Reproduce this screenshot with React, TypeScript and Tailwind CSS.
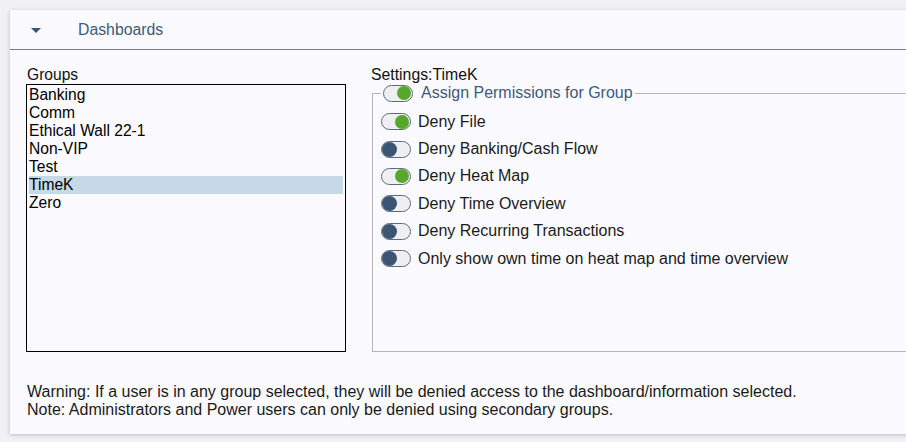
import React from "react";

const groups = ["Banking", "Comm", "Ethical Wall 22-1", "Non-VIP", "Test", "TimeK", "Zero"];

const perms: { label: string; on: boolean }[] = [
  { label: "Deny File", on: true },
  { label: "Deny Banking/Cash Flow", on: false },
  { label: "Deny Heat Map", on: true },
  { label: "Deny Time Overview", on: false },
  { label: "Deny Recurring Transactions", on: false },
  { label: "Only show own time on heat map and time overview", on: false },
];

function Toggle({ on }: { on: boolean }) {
  return (
    <div
      className={`relative w-[30px] h-[17px] rounded-full border border-[#5b6b7e] bg-[#efeff1] flex items-center px-[1px] ${
        on ? "justify-end" : "justify-start"
      }`}
    >
      <div
        className={`rounded-full ${
          on ? "w-[14px] h-[14px] bg-[#57a72a] mr-[0px]" : "w-[15px] h-[15px] bg-[#3c5573] -ml-[1px]"
        }`}
      />
    </div>
  );
}

export default function App() {
  return (
    <div
      className="w-[906px] h-[442px] overflow-hidden bg-[#f1f1f5] pt-[10px] pl-[10px]"
      style={{ fontFamily: '"Liberation Sans", Arial, sans-serif' }}
    >
      <div className="w-[920px] h-[424px] bg-[#fafaff] shadow-[0_1px_4px_rgba(0,0,0,0.22)]">
        <div className="h-[40px] border-b border-[#777b80] flex items-center pt-[1px]">
          <div className="ml-[21px] w-0 h-0 border-l-[5px] border-r-[5px] border-t-[5px] border-l-transparent border-r-transparent border-t-[#3c5573]" />
          <span className="ml-[37px] text-[15.8px] text-[#3e5a78] leading-[18px]">Dashboards</span>
        </div>

        <div className="flex pl-[16px] pt-[15px]">
          <div className="flex flex-col w-[320px]">
            <div className="text-[15.6px] leading-[19px] text-[#111] pl-[1px]">Groups</div>
            <div className="h-[268px] border border-black p-[2px] pt-[1px]">
              {groups.map((g) => (
                <div
                  key={g}
                  className={`h-[18px] leading-[18px] text-[15.6px] text-black ${
                    g === "TimeK" ? "bg-[#c5d9e6]" : ""
                  }`}
                >
                  {g}
                </div>
              ))}
            </div>
          </div>

          <div className="flex flex-col ml-[25px] flex-1">
            <div className="text-[15.8px] leading-[19px] text-[#111]">Settings:TimeK</div>
            <fieldset className="h-[268px] border border-[#b4b5bb] border-r-0 ml-[1px] pl-[8px]">
              <legend className="px-[2px] flex items-center h-[18px]">
                <Toggle on={true} />
                <span className="ml-[8px] text-[16px] text-[#3e5a78] leading-[18px]">
                  Assign Permissions for Group
                </span>
              </legend>
              <div className="flex flex-col pt-[6px]">
                {perms.map((p) => (
                  <div key={p.label} className="h-[27.4px] flex items-center">
                    <Toggle on={p.on} />
                    <span className="ml-[7px] text-[16px] text-[#1a1a1a] leading-[18px]">{p.label}</span>
                  </div>
                ))}
              </div>
            </fieldset>
          </div>
        </div>

        <div className="pl-[17px] pt-[31px] text-[16px] leading-[18px] text-[#1a1a1a]">
          <div>Warning: If a user is in any group selected, they will be denied access to the dashboard/information selected.</div>
          <div>Note: Administrators and Power users can only be denied using secondary groups.</div>
        </div>
      </div>
    </div>
  );
}
